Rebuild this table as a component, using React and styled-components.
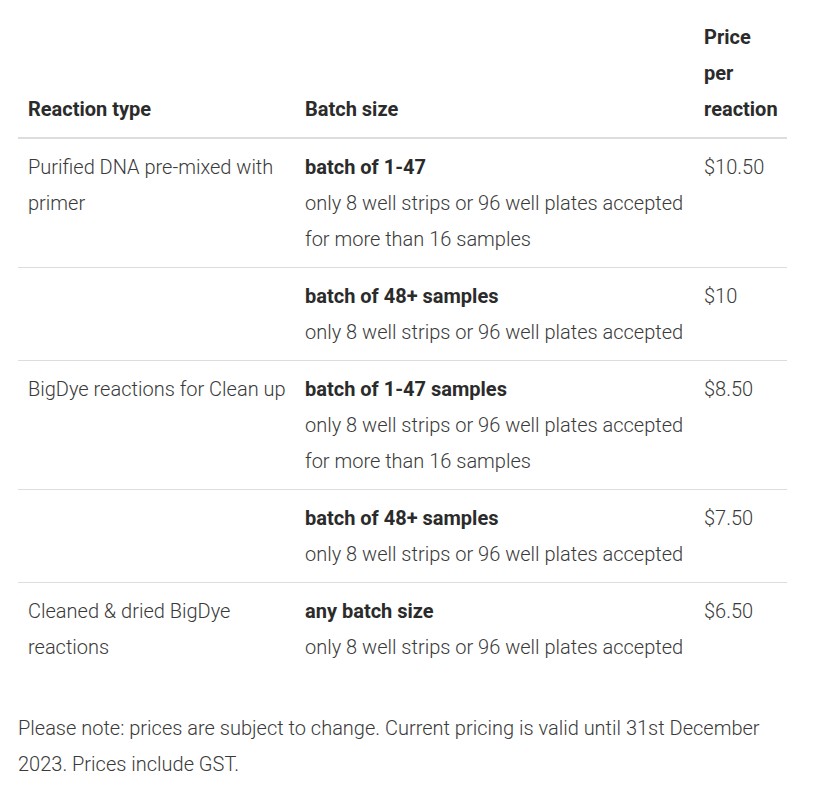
import React from "react";
import styled, { createGlobalStyle } from "styled-components";

const GlobalStyle = createGlobalStyle`
  html, body {
    margin: 0;
    padding: 0;
    background: #fff;
  }
`;

const Page = styled.div`
  width: 769px;
  padding: 9px 18px;
  font-family: Roboto, "Liberation Sans", sans-serif;
  font-size: 20px;
  line-height: 36px;
  font-weight: 300;
  color: #3a3a3a;
`;

const Table = styled.table`
  width: 100%;
  border-collapse: collapse;
  table-layout: fixed;
`;

const HeadCell = styled.th`
  text-align: left;
  vertical-align: bottom;
  font-weight: 700;
  color: #2b2b2b;
  padding: 10px 6px 10px 10px;
  border-bottom: 2px solid #ddd;
`;

const Row = styled.tr`
  border-bottom: ${(p) => (p.$last ? "none" : "1px solid #ddd")};
`;

const Cell = styled.td`
  vertical-align: top;
  padding: 10px 6px 10px 10px;
`;

const Batch = styled.strong`
  display: block;
  font-weight: 700;
  color: #2b2b2b;
`;

const Note = styled.p`
  margin: 35px 0 0;
`;

const rows = [
  {
    type: "Purified DNA pre-mixed with primer",
    batch: "batch of 1-47",
    note: "only 8 well strips or 96 well plates accepted for more than 16 samples",
    price: "$10.50",
  },
  {
    type: "",
    batch: "batch of 48+ samples",
    note: "only 8 well strips or 96 well plates accepted",
    price: "$10",
  },
  {
    type: "BigDye reactions for Clean up",
    batch: "batch of 1-47 samples",
    note: "only 8 well strips or 96 well plates accepted for more than 16 samples",
    price: "$8.50",
  },
  {
    type: "",
    batch: "batch of 48+ samples",
    note: "only 8 well strips or 96 well plates accepted",
    price: "$7.50",
  },
  {
    type: "Cleaned & dried BigDye reactions",
    batch: "any batch size",
    note: "only 8 well strips or 96 well plates accepted",
    price: "$6.50",
  },
];

const App = () => {
  return (
    <Page>
      <GlobalStyle />
      <Table>
        <colgroup>
          <col style={{ width: "277px" }} />
          <col style={{ width: "399px" }} />
          <col style={{ width: "93px" }} />
        </colgroup>
        <thead>
          <tr>
            <HeadCell>Reaction type</HeadCell>
            <HeadCell>Batch size</HeadCell>
            <HeadCell>Price per reaction</HeadCell>
          </tr>
        </thead>
        <tbody>
          {rows.map((r, i) => (
            <Row key={i} $last={i === rows.length - 1}>
              <Cell>{r.type}</Cell>
              <Cell>
                <Batch>{r.batch}</Batch>
                {r.note}
              </Cell>
              <Cell>{r.price}</Cell>
            </Row>
          ))}
        </tbody>
      </Table>
      <Note>
        Please note: prices are subject to change. Current pricing is valid
        until 31st December 2023. Prices include GST.
      </Note>
    </Page>
  );
};

export default App;
